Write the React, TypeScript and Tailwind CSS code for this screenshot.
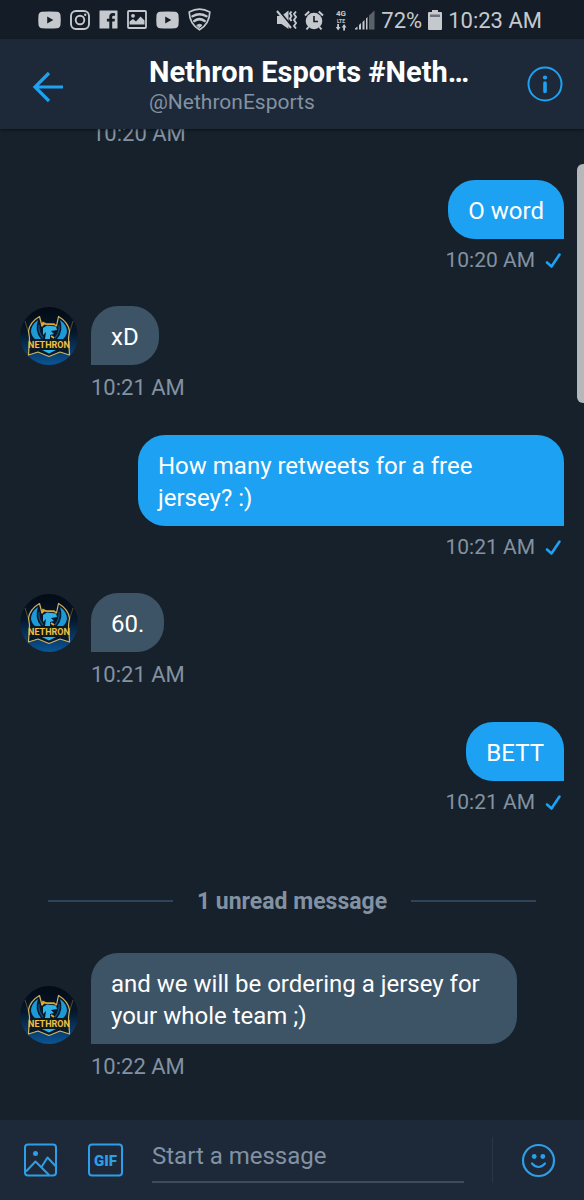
import clsx from "clsx";

type Message = { id: number; mine?: boolean; text: string; time: string };

const READ: Message[] = [
  { id: 1, mine: true, text: "O word", time: "10:20 AM" },
  { id: 2, text: "xD", time: "10:21 AM" },
  { id: 3, mine: true, text: "How many retweets for a free jersey? :)", time: "10:21 AM" },
  { id: 4, text: "60.", time: "10:21 AM" },
  { id: 5, mine: true, text: "BETT", time: "10:21 AM" },
];

const UNREAD: Message[] = [
  { id: 6, text: "and we will be ordering a jersey for your whole team ;)", time: "10:22 AM" },
];

function YoutubeIcon() {
  return (
    <svg width="23" height="18" viewBox="0 0 23 18" fill="currentColor">
      <path fillRule="evenodd" d="M4 .8Q11.500 0 19 .8Q22 1 22.500 4Q23 9 22.500 14Q22 17 19 17.200Q11.500 18 4 17.200Q1 17 .5 14Q0 9 .5 4Q1 1 4 .8ZM9.200 5.500V12.500L15.300 9Z" />
    </svg>
  );
}

function InstagramIcon() {
  return (
    <svg width="20" height="20" viewBox="0 0 20 20" fill="none" stroke="currentColor" strokeWidth="1.900">
      <rect x="1" y="1" width="18" height="18" rx="5" />
      <circle cx="10" cy="10" r="4.300" />
      <circle cx="15.200" cy="4.800" r="1.200" fill="currentColor" stroke="none" />
    </svg>
  );
}

function FacebookIcon() {
  return (
    <svg width="19" height="19" viewBox="0 0 19 19" fill="currentColor">
      <path d="M1 .5H18Q18.500 .5 18.500 1V18Q18.500 18.500 18 18.500H13.200V11.500H15.600L16 8.700H13.200V7Q13.200 5.700 14.600 5.700H16.100V3.200Q15 3 13.800 3Q10.300 3 10.300 6.500V8.700H7.900V11.500H10.300V18.500H1Q.5 18.500 .5 18V1Q.5 .5 1 .5Z" />
    </svg>
  );
}

function GalleryIcon() {
  return (
    <svg width="20" height="19" viewBox="0 0 20 19">
      <rect x="1" y="1" width="18" height="17" rx="1" fill="none" stroke="currentColor" strokeWidth="1.800" />
      <circle cx="6" cy="5.800" r="1.900" fill="currentColor" />
      <path d="M2.500 14.500V11.500L6 9L9 11.500L13.500 6.500L17.500 10.500V14.500Z" fill="currentColor" />
    </svg>
  );
}

function ShieldWifiIcon() {
  return (
    <svg width="23" height="23" viewBox="0 0 23 23" fill="none" stroke="currentColor" strokeLinecap="round">
      <path d="M1.200 4Q6.500 1.200 11.500 1.200T21.800 4Q21.500 16 11.500 21.800Q1.500 16 1.200 4Z" strokeWidth="1.700" strokeLinejoin="round" />
      <path d="M4.500 8.300Q11.500 4 18.500 8.300" strokeWidth="2.500" />
      <path d="M6.300 13Q11.500 9.300 16.700 13" strokeWidth="2.500" />
      <path d="M9 17.200Q11.500 15.300 14 17.200L11.500 19.500Z" fill="currentColor" strokeWidth="1" />
    </svg>
  );
}

function MuteVibrateIcon() {
  return (
    <svg width="22" height="20" viewBox="0 0 22 20" fill="currentColor">
      <path d="M1 6H5.500L12.500 .5V19L5.500 14H1Z" />
      <path d="M2.500 .5L16 16.500" stroke="#141d27" strokeWidth="2" />
      <path d="M1 1L15 18" stroke="currentColor" strokeWidth="2" />
      <path d="M15.500 1.500L14 3.500L15.500 6L14 8.500L15.500 11M20 1.500L18 4L20 7L18 10L20 13L18 16L20 18.500" fill="none" stroke="currentColor" strokeWidth="1.900" />
    </svg>
  );
}

function AlarmIcon() {
  return (
    <svg width="20" height="21" viewBox="0 0 20 21">
      <path d="M4.500 17L2.500 19.500M15.500 17L17.500 19.500M1 5.500L5.200 1.500M19 5.500L14.800 1.500" stroke="currentColor" strokeWidth="2" />
      <circle cx="10" cy="11" r="8.300" fill="currentColor" />
      <path d="M10 6V11.500H14" fill="none" stroke="#141d27" strokeWidth="1.600" />
    </svg>
  );
}

function LteIcon() {
  return (
    <svg width="14" height="22" viewBox="0 0 14 22" fill="currentColor" className="font-bold">
      <text x="7" y="7" fontSize="8" textAnchor="middle">4G</text>
      <text x="7" y="14" fontSize="5" textAnchor="middle">LTE</text>
      <path d="M3.200 15H5V18H6.500L4.100 21.500L1.700 18H3.200ZM9.200 21.500H11V18.500H12.500L10.100 15L7.700 18.500H9.200Z" />
    </svg>
  );
}

function SignalIcon() {
  return (
    <svg width="20" height="20" viewBox="0 0 20 20" fill="currentColor">
      <path d="M0 19.500V18.500L2.500 16.500V19.500ZM4 19.500V15L6 13V19.500ZM7.500 19.500V12L9.500 10V19.500ZM11 19.500V8.500L12.500 7V19.500Z" />
      <path d="M14 19.500V5.500L19.500 .5V19.500Z" opacity=".4" />
    </svg>
  );
}

function BatteryIcon() {
  return (
    <svg width="14" height="20" viewBox="0 0 14 20" fill="currentColor">
      <path d="M4 0H10V2H13Q14 2 14 3V19Q14 20 13 20H1Q0 20 0 19V3Q0 2 1 2H4Z" />
      <path d="M2 4.500H12V7H2Z" fill="#6c7279" />
    </svg>
  );
}

function StatusBar() {
  return (
    <div className="flex h-[39px] shrink-0 items-center justify-between bg-[#141d27] pr-[42px] pl-[38px] text-[#c5c9cd]">
      <div className="flex items-center gap-[9px]">
        <YoutubeIcon />
        <InstagramIcon />
        <FacebookIcon />
        <GalleryIcon />
        <YoutubeIcon />
        <ShieldWifiIcon />
      </div>
      <div className="flex items-center gap-[6px] pt-px text-[22px]">
        <MuteVibrateIcon />
        <AlarmIcon />
        <span className="mr-px ml-1">
          <LteIcon />
        </span>
        <SignalIcon />
        <span>72%</span>
        <BatteryIcon />
        <span>10:23 AM</span>
      </div>
    </div>
  );
}

function Header() {
  return (
    <header className="z-10 flex h-[90px] shrink-0 items-center bg-[#1d2938] px-5 shadow-sm shadow-black/40">
      <button aria-label="Back" className="mt-[6px] mr-[73px] flex size-14 items-center justify-center text-[#1da1f2]">
        <svg width="32" height="32" viewBox="0 0 32 32" fill="none" stroke="currentColor" strokeWidth="3.200">
          <path d="M17 2L3 16L17 30M3 16H31" />
        </svg>
      </button>
      <div className="min-w-0 flex-1 pt-[3px]">
        <h1 className="truncate text-[29px] leading-8 font-bold text-white">Nethron Esports #Neth…</h1>
        <p className="text-[21px] leading-7 text-[#8292a2]">@NethronEsports</p>
      </div>
      <button aria-label="Conversation info" className="text-[#1da1f2]">
        <svg width="38" height="38" viewBox="0 0 38 38" fill="none" stroke="currentColor">
          <circle cx="19" cy="19" r="16.500" strokeWidth="2" />
          <circle cx="19" cy="12.500" r="2.100" fill="currentColor" stroke="none" />
          <path d="M19 18V26.500" strokeWidth="3.600" strokeLinecap="round" />
        </svg>
      </button>
    </header>
  );
}

function Avatar() {
  return (
    <svg width="58" height="58" viewBox="0 0 58 58" className="shrink-0" role="img" aria-label="Nethron Esports">
      <defs>
        <linearGradient id="sky" x1="0" y1="0" x2="0" y2="1">
          <stop offset="0" stopColor="#030a14" />
          <stop offset=".45" stopColor="#06182c" />
          <stop offset="1" stopColor="#0b5596" />
        </linearGradient>
      </defs>
      <circle cx="29" cy="29" r="29" fill="url(#sky)" />
      <path d="M5 14L9 27M53 14L49 27" stroke="#5a4a22" strokeWidth="1" />
      {/* crest with both wings */}
      <path
        d="M19.500 9.500Q10 15 8.500 24L9.500 31L8.500 48L18 45L29 49.500L40 45L49.500 48L48.500 31L49.500 24Q48 15 38.500 9.500L36.500 19L34 17L24 17L22 19Z"
        fill="#07182b"
        stroke="#d2b362"
        strokeWidth="1.200"
        strokeLinejoin="round"
      />
      <path d="M18 13Q11 18 11 25Q12 30 15 32H21Q14 24 18 13ZM40 13Q47 18 47 25Q46 30 43 32H37Q44 24 40 13Z" fill="#1c9ad8" />
      <path d="M19 18Q18 25 23 31M39 18Q40 25 35 31" stroke="#0f5583" strokeWidth="1.200" fill="none" />
      {/* dragon head */}
      <path d="M23 21L27 18.500L36 19.500L37 23L31 24L34 27L30 28V32H25L26 25L23 28Z" fill="#31b1e6" />
      <path d="M22 19L23 15.500L26 17L35 17.500" stroke="#e6a72b" strokeWidth="1.500" fill="none" />
      <path d="M31 29L34 31" stroke="#e6a72b" strokeWidth="1.800" />
      <path d="M22 43H36L29 46.500Z" fill="#24b8ef" />
      <path d="M10 32.500H48V42.500H10Z" fill="#101b20" />
      <text x="29" y="41" textAnchor="middle" fontSize="9" className="font-bold" fill="#f2c144">
        NETHRON
      </text>
    </svg>
  );
}

function SentCheck() {
  return (
    <svg width="17" height="17" viewBox="0 0 17 17" fill="none" stroke="#1da1f2" strokeWidth="2.600" strokeLinecap="round" strokeLinejoin="round" aria-label="Sent">
      <path d="M2 10.500L6.500 14.500L14.500 2.500" />
    </svg>
  );
}

function Bubble({ mine, text, time }: Message) {
  return (
    <li className={clsx("flex flex-col", mine ? "items-end" : "items-start")}>
      <div className="flex items-end gap-[13px]">
        {!mine && <Avatar />}
        <p
          className={clsx(
            "max-w-[426px] rounded-[27px] px-5 pt-[15px] pb-3 text-2xl leading-8 text-white",
            mine ? "rounded-br-none bg-[#1da1f2]" : "rounded-bl-none bg-[#3d5466]",
          )}
        >
          {text}
        </p>
      </div>
      <div
        className={clsx(
          "mt-2 flex items-center gap-[10px] text-[#8292a2]",
          mine ? "pr-[2px] text-[21px] leading-[27px]" : "pl-[71px] text-[22px] leading-[30px]",
        )}
      >
        <time>{time}</time>
        {mine && <SentCheck />}
      </div>
    </li>
  );
}

function UnreadDivider() {
  return (
    <div className="mx-7 flex items-center gap-6 pt-[37px] pb-9">
      <span className="h-[2px] flex-1 bg-[#2f4459]" />
      <span className="pt-[2px] text-[23px] leading-[30px] font-bold text-[#8292a2]">1 unread message</span>
      <span className="h-[2px] flex-1 bg-[#2f4459]" />
    </div>
  );
}

function Composer() {
  return (
    <form className="flex h-20 shrink-0 items-center bg-[#1d2938] pr-7 pl-6 text-[#2d9ee8]">
      <button type="button" aria-label="Add photo">
        <svg width="34" height="34" viewBox="0 0 34 34" fill="none" stroke="currentColor" strokeWidth="2" strokeLinejoin="round">
          <rect x="1" y="1.500" width="31" height="31" rx="3" />
          <circle cx="11.500" cy="10.500" r="2.500" fill="currentColor" stroke="none" />
          <path d="M2 28.500L11.500 18.500L25 32M17.500 24L23.500 14.500L32 23.500" />
        </svg>
      </button>
      <button type="button" aria-label="Add GIF" className="ml-[29px]">
        <svg width="37" height="34" viewBox="0 0 37 34">
          <rect x="2" y="1.500" width="33" height="31" rx="3" fill="none" stroke="currentColor" strokeWidth="2" />
          <text x="18.500" y="22.500" textAnchor="middle" fontSize="15" fontWeight="900" fill="currentColor">
            GIF
          </text>
        </svg>
      </button>
      <input
        aria-label="Message"
        placeholder="Start a message"
        className="mb-1 ml-7 h-[50px] min-w-0 flex-1 border-b-2 border-[#3c4c5c] pb-[2px] text-2xl text-white outline-none placeholder:text-[#8292a2]"
      />
      <span className="mr-7 ml-7 h-[46px] w-px bg-[#273746]" />
      <button type="button" aria-label="Add emoji">
        <svg width="35" height="35" viewBox="0 0 35 35" fill="none" stroke="currentColor" strokeLinecap="round">
          <circle cx="17.500" cy="17.500" r="15.500" strokeWidth="2.200" />
          <circle cx="13.200" cy="13.500" r="2.400" fill="currentColor" stroke="none" />
          <circle cx="21.800" cy="13.500" r="2.400" fill="currentColor" stroke="none" />
          <path d="M11 20.500Q17.500 27.500 24 20.500" strokeWidth="2.200" />
        </svg>
      </button>
    </form>
  );
}

export default function App() {
  return (
    <div className="flex h-screen flex-col overflow-hidden bg-[#17212b] font-['Roboto',sans-serif]">
      <StatusBar />
      <Header />
      <main className="relative flex min-h-0 flex-1 flex-col justify-end overflow-hidden px-5 pb-[38px]">
        <time className="mb-[31px] pl-[72px] text-[22px] leading-[30px] text-[#8292a2]">10:20 AM</time>
        <ul className="flex flex-col gap-8 pb-8">
          {READ.map((m) => (
            <Bubble key={m.id} {...m} />
          ))}
        </ul>
        <UnreadDivider />
        <ul className="flex flex-col gap-8">
          {UNREAD.map((m) => (
            <Bubble key={m.id} {...m} />
          ))}
        </ul>
        <div className="absolute top-[35px] right-0 h-[239px] w-[7px] rounded-l-md bg-[#b4b8bb]" />
      </main>
      <Composer />
    </div>
  );
}
